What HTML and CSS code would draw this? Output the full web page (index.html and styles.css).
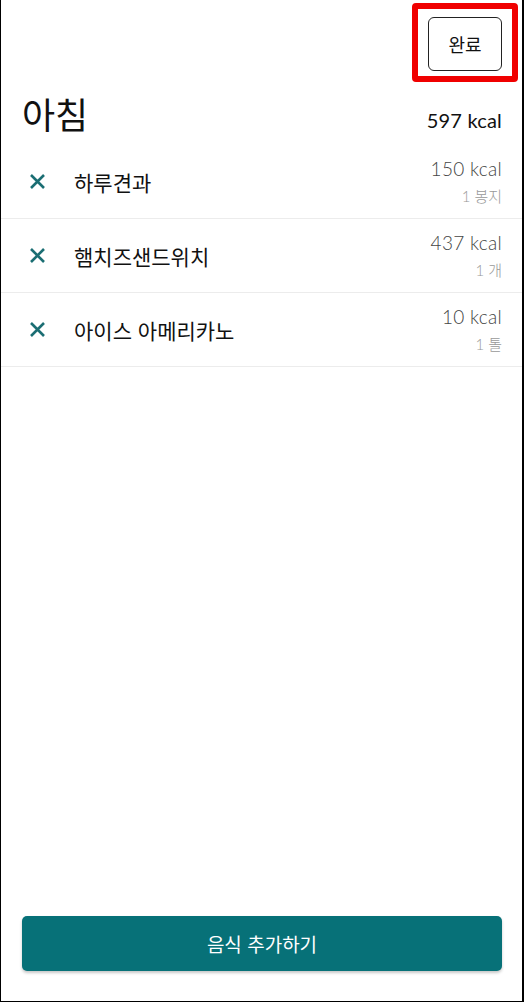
FILE: index.html
```html
<!DOCTYPE html>
<html lang="ko">
<head>
    <meta charset="UTF-8">
    <meta name="viewport" content="width=device-width, initial-scale=1.0">
    <title>아침</title>
    <link rel="stylesheet" href="styles.css">
</head>
<body>
<div class="screen">
    <div class="top-bar">
        <div class="highlight">
            <button class="done-btn">완료</button>
        </div>
    </div>

    <div class="meal-head">
        <h1 class="meal-title">아침</h1>
        <span class="meal-total">597 kcal</span>
    </div>

    <ul class="food-list">
        <li class="food-row">
            <span class="remove">
                <svg width="17" height="17" viewBox="0 0 17 17"><path d="M2 2 L15 15 M15 2 L2 15" stroke="#1b6e73" stroke-width="2.6"/></svg>
            </span>
            <span class="food-name">하루견과</span>
            <span class="food-info">
                <span class="kcal">150 kcal</span>
                <span class="amount">1 봉지</span>
            </span>
        </li>
        <li class="food-row">
            <span class="remove">
                <svg width="17" height="17" viewBox="0 0 17 17"><path d="M2 2 L15 15 M15 2 L2 15" stroke="#1b6e73" stroke-width="2.6"/></svg>
            </span>
            <span class="food-name">햄치즈샌드위치</span>
            <span class="food-info">
                <span class="kcal">437 kcal</span>
                <span class="amount">1 개</span>
            </span>
        </li>
        <li class="food-row">
            <span class="remove">
                <svg width="17" height="17" viewBox="0 0 17 17"><path d="M2 2 L15 15 M15 2 L2 15" stroke="#1b6e73" stroke-width="2.6"/></svg>
            </span>
            <span class="food-name">아이스 아메리카노</span>
            <span class="food-info">
                <span class="kcal">10 kcal</span>
                <span class="amount">1 톨</span>
            </span>
        </li>
    </ul>

    <div class="bottom">
        <button class="add-btn">음식 추가하기</button>
    </div>
</div>
</body>
</html>
```

FILE: styles.css
```css
* {
    box-sizing: border-box;
}

body {
    margin: 0;
    font-family: Lato, "Noto Sans CJK KR", sans-serif;
    background-color: #fff;
    color: #111;
}

.screen {
    height: 1002px;
    display: flex;
    flex-direction: column;
    border-left: 1px solid #000;
    border-right: 2px solid #000;
    border-bottom: 1px solid #000;
}

.top-bar {
    height: 88px;
    display: flex;
    justify-content: flex-end;
    align-items: flex-start;
    padding: 3px 4px 0 0;
}

/* red annotation box round the button */
.highlight {
    border: 6px solid #f00000;
    border-radius: 4px;
    padding: 8px 10px 5px 10px;
}

.done-btn {
    width: 74px;
    height: 54px;
    background: #fff;
    border: 1.5px solid #222;
    border-radius: 6px;
    font-family: "Noto Sans CJK KR", sans-serif;
    font-size: 18px;
    color: #111;
    padding: 0;
}

.meal-head {
    display: flex;
    justify-content: space-between;
    align-items: center;
    padding: 0 20px 0 21px;
    height: 57px;
}

.meal-title {
    margin: 0;
    font-family: "Noto Sans CJK KR", sans-serif;
    font-weight: 400;
    font-size: 36px;
    line-height: 1;
    margin-top: -8px;
}

.meal-total {
    font-size: 20px;
    font-weight: 400;
    color: #111;
    letter-spacing: 0.2px;
    margin-top: 6px;
}

.food-list {
    list-style: none;
    margin: 0;
    padding: 0;
}

.food-row {
    height: 74px;
    display: flex;
    align-items: center;
    padding: 0 20px 0 28px;
    border-bottom: 1px solid #ececec;
}

.remove {
    width: 45px;
    display: flex;
    align-items: center;
}

.food-name {
    flex: 1;
    font-family: "Noto Sans CJK KR", sans-serif;
    font-size: 21px;
    color: #111;
}

.food-info {
    display: flex;
    flex-direction: column;
    align-items: flex-end;
}

.kcal {
    font-size: 19px;
    font-weight: 300;
    letter-spacing: 0.3px;
    color: #444;
}

.amount {
    font-family: Lato, "Noto Sans CJK KR", sans-serif;
    font-size: 15px;
    font-weight: 300;
    color: #999;
    margin-top: 5px;
}

.bottom {
    margin-top: auto;
    padding: 0 20px 30px 21px;
}

.add-btn {
    width: 100%;
    height: 55px;
    border: none;
    border-radius: 5px;
    background-color: #077178;
    color: #fff;
    font-family: "Noto Sans CJK KR", sans-serif;
    font-size: 19px;
    box-shadow: 0 2px 3px rgba(0, 0, 0, 0.22);
}
```
